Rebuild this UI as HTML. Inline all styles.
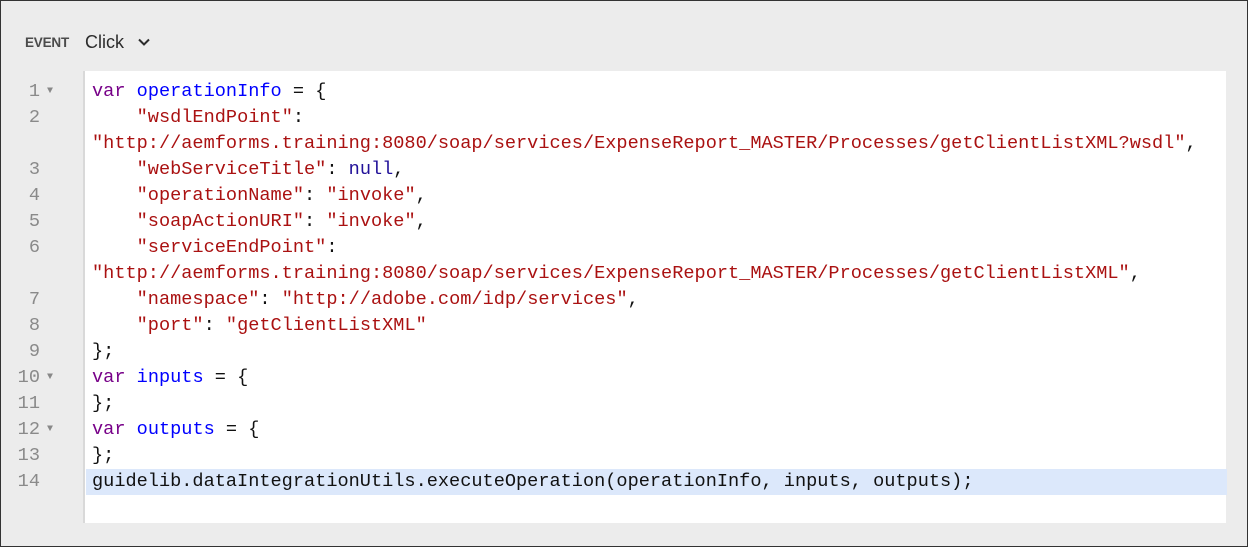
<!DOCTYPE html>
<html><head><meta charset="utf-8"><style>
html,body{margin:0;padding:0}
body{width:1248px;height:547px;background:#ececec;box-sizing:border-box;border:1px solid #333;position:relative;overflow:hidden;font-family:"Liberation Sans",sans-serif}
.hdr{position:absolute;left:24px;top:30px;height:22px;display:flex;align-items:center}
.ev{font-size:13.5px;color:#4b4b4b;letter-spacing:-0.2px;font-weight:600}
.ck{font-size:18px;color:#2c2c2c;margin-left:16px}
.chev{margin-left:13px}
.gut{position:absolute;left:0;top:70px;width:82px;height:452px;border-right:2px solid #d9d9d9;background:#ececec}
.ed{position:absolute;left:84px;top:70px;width:1141px;height:452px;background:#fff}
.code{position:absolute;left:-1px;top:78px;width:1227px;font-family:"Liberation Mono",monospace;font-size:18.6px;line-height:26px}
.r{height:26px;position:relative;white-space:pre}
.n{position:absolute;left:0;width:40px;text-align:right;color:#8a8a8a}
.f{position:absolute;left:47px;top:0;font-size:10px;color:#888}
.t{position:absolute;left:92px;color:#111}
.hl{background:#dce8fb;left:86px;right:0;position:absolute;top:0;bottom:0}
.k{color:#770088}.v{color:#0000ff}.s{color:#a11}.a{color:#221199}
</style></head><body>
<div class="hdr"><span class="ev">EVENT</span><span class="ck">Click</span>
<svg class="chev" width="14" height="10" viewBox="0 0 14 10"><path d="M2 2.5 L7 7.5 L12 2.5" fill="none" stroke="#2c2c2c" stroke-width="2"/></svg></div>
<div class="gut"></div>
<div class="ed"></div>
<div class="code">
<div class="r"><span class="n">1</span><span class="f">▼</span><span class="t"><span class="k">var</span> <span class="v">operationInfo</span> = {</span></div>
<div class="r"><span class="n">2</span><span class="t">    <span class="s">"wsdlEndPoint"</span>:</span></div>
<div class="r"><span class="t"><span class="s">"http://aemforms.training:8080/soap/services/ExpenseReport_MASTER/Processes/getClientListXML?wsdl"</span>,</span></div>
<div class="r"><span class="n">3</span><span class="t">    <span class="s">"webServiceTitle"</span>: <span class="a">null</span>,</span></div>
<div class="r"><span class="n">4</span><span class="t">    <span class="s">"operationName"</span>: <span class="s">"invoke"</span>,</span></div>
<div class="r"><span class="n">5</span><span class="t">    <span class="s">"soapActionURI"</span>: <span class="s">"invoke"</span>,</span></div>
<div class="r"><span class="n">6</span><span class="t">    <span class="s">"serviceEndPoint"</span>:</span></div>
<div class="r"><span class="t"><span class="s">"http://aemforms.training:8080/soap/services/ExpenseReport_MASTER/Processes/getClientListXML"</span>,</span></div>
<div class="r"><span class="n">7</span><span class="t">    <span class="s">"namespace"</span>: <span class="s">"http://adobe.com/idp/services"</span>,</span></div>
<div class="r"><span class="n">8</span><span class="t">    <span class="s">"port"</span>: <span class="s">"getClientListXML"</span></span></div>
<div class="r"><span class="n">9</span><span class="t">};</span></div>
<div class="r"><span class="n">10</span><span class="f">▼</span><span class="t"><span class="k">var</span> <span class="v">inputs</span> = {</span></div>
<div class="r"><span class="n">11</span><span class="t">};</span></div>
<div class="r"><span class="n">12</span><span class="f">▼</span><span class="t"><span class="k">var</span> <span class="v">outputs</span> = {</span></div>
<div class="r"><span class="n">13</span><span class="t">};</span></div>
<div class="r"><div class="hl"></div><span class="n">14</span><span class="t">guidelib.dataIntegrationUtils.executeOperation(operationInfo, inputs, outputs);</span></div>
</div>
</body></html>
